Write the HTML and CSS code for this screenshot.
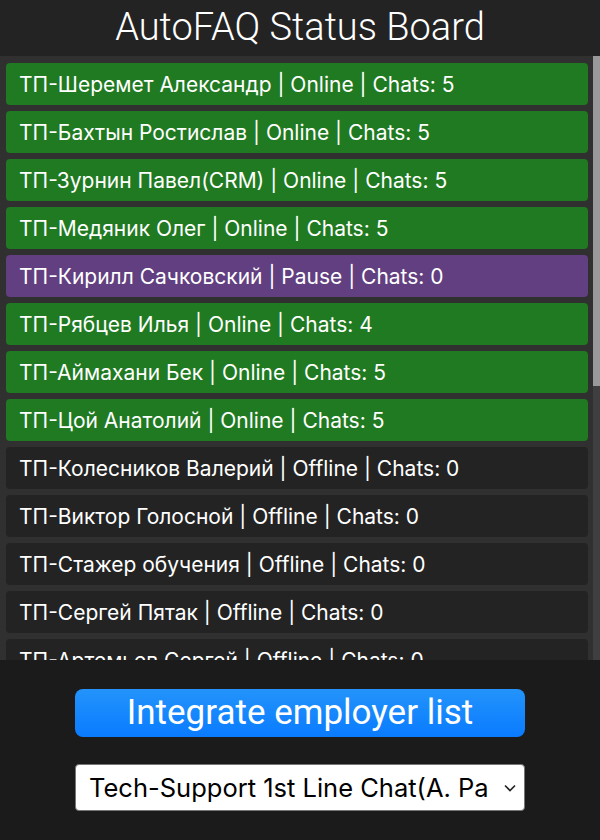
FILE: index.html
```html
<!DOCTYPE html>
<html lang="ru">
<head>
<meta charset="utf-8">
<title>AutoFAQ Status Board</title>
<link rel="stylesheet" href="styles.css">
</head>
<body>
<div class="app">
  <header class="header"><h1 class="title">AutoFAQ Status Board</h1></header>
  <div class="list-wrap">
    <main class="list">
      <div class="row online">ТП-Шеремет Александр | Online | Chats: 5</div>
      <div class="row online">ТП-Бахтын Ростислав | Online | Chats: 5</div>
      <div class="row online">ТП-Зурнин Павел(CRM) | Online | Chats: 5</div>
      <div class="row online">ТП-Медяник Олег | Online | Chats: 5</div>
      <div class="row pause">ТП-Кирилл Сачковский | Pause | Chats: 0</div>
      <div class="row online">ТП-Рябцев Илья | Online | Chats: 4</div>
      <div class="row online">ТП-Аймахани Бек | Online | Chats: 5</div>
      <div class="row online">ТП-Цой Анатолий | Online | Chats: 5</div>
      <div class="row offline">ТП-Колесников Валерий | Offline | Chats: 0</div>
      <div class="row offline">ТП-Виктор Голосной | Offline | Chats: 0</div>
      <div class="row offline">ТП-Стажер обучения | Offline | Chats: 0</div>
      <div class="row offline">ТП-Сергей Пятак | Offline | Chats: 0</div>
      <div class="row offline">ТП-Артемьев Сергей | Offline | Chats: 0</div>
    </main>
    <div class="scrollbar"><div class="thumb"></div></div>
  </div>
  <footer class="footer">
    <button class="btn" type="button">Integrate employer list</button>
    <div class="select-wrap">
      <select class="select">
        <option>Tech-Support 1st Line Chat(A. Pavlov)</option>
      </select>
      <svg class="chevron" width="12" height="8" viewBox="0 0 12 8" aria-hidden="true"><path d="M1 1.5 L6 6.5 L11 1.5" fill="none" stroke="#222" stroke-width="1.6"/></svg>
    </div>
  </footer>
</div>
</body>
</html>
```
FILE: styles.css
```css
html, body {
  margin: 0;
  padding: 0;
  height: 100%;
  background: #1b1b1b;
}
.app {
  height: 840px;
  display: flex;
  flex-direction: column;
}
.header {
  height: 56px;
  flex: none;
  background: #232323;
  display: flex;
  align-items: center;
  justify-content: center;
}
.title {
  margin: 0;
  font-family: Roboto, "Liberation Sans", sans-serif;
  font-weight: 300;
  font-size: 38px;
  color: #fff;
  line-height: 1;
  padding-bottom: 2px;
}
.list-wrap {
  flex: 1;
  min-height: 0;
  display: flex;
  background: #303030;
}
.list {
  flex: 1;
  min-width: 0;
  overflow: hidden;
  padding: 7px 5px 7px 6px;
  display: flex;
  flex-direction: column;
  gap: 6px;
}
.scrollbar {
  flex: none;
  width: 7px;
  background: #3f3f3f;
}
.thumb {
  height: 330px;
  background: #999;
}
.row {
  flex: none;
  height: 42px;
  border-radius: 4px;
  padding: 0 13px;
  display: flex;
  align-items: center;
  font-family: Inter, "Noto Sans", sans-serif;
  font-size: 21px;
  color: #fff;
  white-space: nowrap;
  overflow: hidden;
  box-sizing: border-box;
}
.online { background: #1f7a21; }
.pause { background: #623f80; }
.offline { background: #232323; }
.footer {
  height: 180px;
  flex: none;
  background: #1b1b1b;
  display: flex;
  flex-direction: column;
  align-items: center;
  padding-top: 29px;
  box-sizing: border-box;
}
.btn {
  width: 450px;
  height: 48px;
  border: none;
  border-radius: 8px;
  background: linear-gradient(#2393fb, #0a7bff);
  color: #fff;
  font-family: Roboto, "Liberation Sans", sans-serif;
  font-size: 35px;
  line-height: 48px;
  padding: 0 0 2px;
}
.select-wrap {
  position: relative;
  margin-top: 27px;
  width: 450px;
  height: 47px;
}
.select {
  -webkit-appearance: none;
  appearance: none;
  width: 100%;
  height: 100%;
  box-sizing: border-box;
  border: 1px solid #767676;
  border-radius: 4px;
  background: #fff;
  color: #000;
  font-family: Inter, "Noto Sans", sans-serif;
  font-size: 25.5px;
  padding: 0 36px 0 13px;
}
.chevron {
  position: absolute;
  right: 9px;
  top: 20px;
  pointer-events: none;
}
```
